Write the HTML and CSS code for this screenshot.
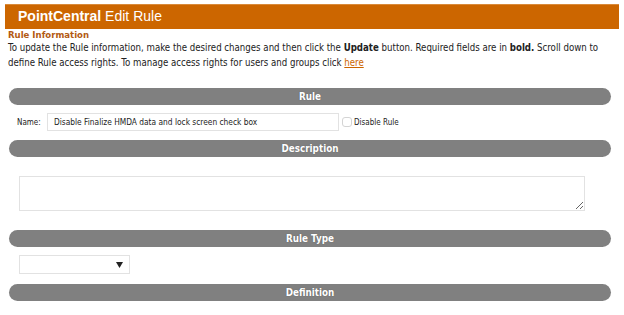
FILE: index.html
```html
<!DOCTYPE html>
<html>
<head>
<meta charset="utf-8">
<link rel="stylesheet" href="styles.css">
</head>
<body>
<div class="header"><b>PointCentral</b> Edit Rule</div>
<div class="info">
  <div class="info-title">Rule Information</div>
  <p class="info-text">To update the Rule information, make the desired changes and then click the <b>Update</b> button. Required fields are in <b>bold.</b> Scroll down to<br>define Rule access rights. To manage access rights for users and groups click <a href="#" class="link">here</a></p>
</div>
<div class="bar bar-rule">Rule</div>
<div class="name-row">
  <label class="name-label">Name:</label>
  <input class="name-input" type="text" value="Disable Finalize HMDA data and lock screen check box">
  <input class="check" type="checkbox">
  <span class="check-label">Disable Rule</span>
</div>
<div class="bar bar-desc">Description</div>
<textarea class="desc"></textarea>
<div class="bar bar-type">Rule Type</div>
<div class="select"><svg width="7" height="6" viewBox="0 0 7 6"><path d="M0 0H7L3.5 6Z" fill="#222"/></svg></div>
<div class="bar bar-def">Definition</div>
</body>
</html>
```
FILE: styles.css
```css
html, body {
  margin: 0;
  padding: 0;
  background: #fff;
}
body {
  font-family: "DejaVu Sans Condensed", "DejaVu Sans", sans-serif;
  color: #222;
  overflow: hidden;
}
.header {
  margin: 4px 5px 0 5px;
  height: 25px;
  background: #cc6600;
  border-top: 1px solid #d98a3a;
  box-sizing: border-box;
  color: #fff;
  font-family: "Liberation Sans", Arial, sans-serif;
  font-size: 14px;
  line-height: 22px;
  padding-left: 13px;
}
.header b {
  font-weight: bold;
}
.info {
  padding: 0 8px;
}
.info-title {
  margin-top: 0;
  font-size: 9.5px;
  font-weight: bold;
  color: #b35a12;
  line-height: 11px;
}
.info-text {
  margin: 0;
  font-size: 9.6px;
  line-height: 15px;
  color: #222;
}
.info-text b {
  font-weight: bold;
}
.link {
  color: #cc6600;
  text-decoration: underline;
}
.bar {
  height: 17px;
  margin-left: 9px;
  margin-right: 13px;
  border-radius: 8.5px;
  background: #808080;
  color: #fff;
  font-family: "DejaVu Sans Condensed", "DejaVu Sans", sans-serif;
  font-weight: bold;
  font-size: 9.8px;
  line-height: 17px;
  text-align: center;
  text-shadow: 0 0 1px #555;
}
.bar-rule {
  margin-top: 18px;
}
.name-row {
  display: flex;
  align-items: center;
  height: 18px;
  margin: 8px 0 9px 0;
  padding-left: 17px;
}
.name-label {
  font-size: 8px;
  color: #222;
  width: 30px;
}
.name-input {
  box-sizing: border-box;
  width: 292px;
  height: 18px;
  border: 1px solid #e2e2e2;
  margin: 0;
  padding: 0 6px;
  font-family: "DejaVu Sans Condensed", "DejaVu Sans", sans-serif;
  font-size: 8.3px;
  color: #222;
  outline: none;
}
.check {
  appearance: none;
  -webkit-appearance: none;
  width: 10px;
  height: 10px;
  margin: 0 2px 0 3px;
  border: 1px solid #d4d4d4;
  border-radius: 3px;
  box-sizing: border-box;
  background: #fff;
}
.check-label {
  font-size: 8px;
  color: #222;
}
.desc {
  display: block;
  box-sizing: border-box;
  margin: 19px 0 0 19px;
  width: 566px;
  height: 35px;
  border: 1px solid #e2e2e2;
  padding: 0;
  outline: none;
  resize: both;
}
.bar-type {
  margin-top: 19px;
}
.select {
  box-sizing: border-box;
  margin: 8px 0 0 19px;
  width: 111px;
  height: 19px;
  border: 1px solid #e2e2e2;
  display: flex;
  align-items: center;
  justify-content: flex-end;
  padding-right: 6px;
}
.bar-def {
  margin-top: 10px;
}
```
